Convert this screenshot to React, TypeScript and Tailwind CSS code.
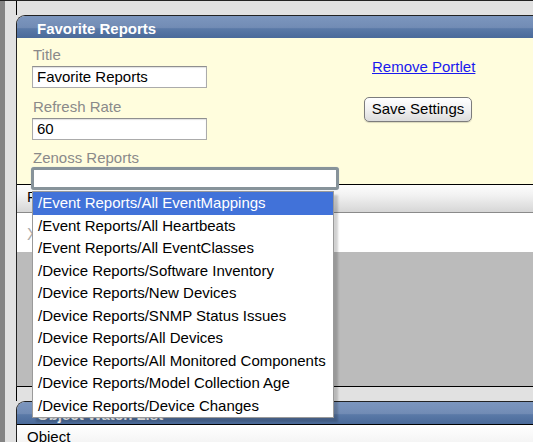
const reports = [
  '/Event Reports/All EventMappings',
  '/Event Reports/All Heartbeats',
  '/Event Reports/All EventClasses',
  '/Device Reports/Software Inventory',
  '/Device Reports/New Devices',
  '/Device Reports/SNMP Status Issues',
  '/Device Reports/All Devices',
  '/Device Reports/All Monitored Components',
  '/Device Reports/Model Collection Age',
  '/Device Reports/Device Changes',
]

const font = { fontFamily: '"Liberation Sans", Arial, Helvetica, sans-serif' }

function PortletHeader({ title }: { title: string }) {
  return (
    <div className="h-[22px] shrink-0 bg-[linear-gradient(to_bottom,#7c96be_0%,#728cb5_52%,#5a79a7_58%,#4a6a9a_100%)] pl-[20px] pt-[4px] text-[15px] font-bold leading-[17px] text-white">
      {title}
    </div>
  )
}

function Field({ label, value }: { label: string; value: string }) {
  return (
    <div className="flex shrink-0 flex-col">
      <div className="ml-[2px] text-[15px] leading-[17px] text-[#8a8a8a]">{label}</div>
      <div className="ml-[1px] mt-[3px] flex h-[22px] w-[175px] shrink-0 items-center border border-[#ababab] border-t-[#8f8f8f] bg-white pl-[4px] text-[15px] text-black shadow-[inset_0_1px_1px_rgba(0,0,0,0.12)]">
        {value}
      </div>
    </div>
  )
}

export default function App() {
  return (
    <div className="relative flex h-[442px] w-[533px] flex-col overflow-hidden bg-[#e1e1e1]" style={font}>
      <div className="h-px w-full shrink-0 bg-[#222]" />
      <div className="flex flex-1">
        <div className="w-[5px] bg-[#848484]" />
        <div className="w-[11px] bg-[#e1e1e1]" />
        <div className="flex flex-1 flex-col">
          <div className="h-[14px] shrink-0 border-l border-black" />

          {/* Favorite Reports portlet */}
          <div className="flex shrink-0 flex-col overflow-hidden rounded-tl-[9px] border-l border-t border-[#222]">
            <PortletHeader title="Favorite Reports" />
            <div className="flex h-[147px] shrink-0 items-start border-b border-black bg-[#fffddd]">
              <div className="flex w-[322px] shrink-0 flex-col pl-[14px] pt-[8px]">
                <Field label="Title" value="Favorite Reports" />
                <div className="mt-[10px] shrink-0">
                  <Field label="Refresh Rate" value="60" />
                </div>
                <div className="ml-[2px] mt-[9px] shrink-0 text-[15px] leading-[17px] text-[#8a8a8a]">Zenoss Reports</div>
                <div className="relative z-10 mt-px h-[23px] w-[308px] shrink-0 rounded-[3px] border-[3px] border-[#87939a] bg-white shadow-[0_0_1px_#b9c3c8]" />
              </div>
              <div className="flex flex-col items-start pl-[25px]">
                <a className="ml-[8px] mt-[20px] text-[15px] leading-[17px] text-[#1a1aee] underline">Remove Portlet</a>
                <button className="mt-[22px] h-[25px] w-[108px] rounded-[5px] border border-[#7c7c7c] bg-[linear-gradient(to_bottom,#ffffff,#f1f1f1_50%,#dcdcdc)] text-[15px] text-black shadow-[0_1px_1px_rgba(0,0,0,0.15)]">
                  Save Settings
                </button>
              </div>
            </div>
            <div className="h-[28px] shrink-0 border-b border-[#8a8a8a] bg-[linear-gradient(to_bottom,#fdfdfd,#f1f1f1_40%,#d6d6d6)] pl-[10px] pt-[3px] text-[15px] leading-[17px] text-black">
              Report
            </div>
            <div className="h-[39px] shrink-0 bg-white pl-[10px] pt-[13px] text-[16px] leading-[18px] text-[#ababab]">X</div>
            <div className="h-[135px] shrink-0 border-b border-black bg-[#bbbbbb]" />
          </div>

          <div className="h-[14px] shrink-0 border-l border-black" />

          {/* Object Watch List portlet */}
          <div className="flex flex-1 flex-col overflow-hidden rounded-tl-[9px] border-l border-t border-[#222]">
            <div className="shrink-0 border-b border-black">
              <PortletHeader title="Object Watch List" />
            </div>
            <div className="flex-1 bg-[linear-gradient(to_bottom,#ffffff,#f3f3f3)] pl-[10px] pt-[3px] text-[15px] leading-[17px] text-black">
              Object
            </div>
          </div>
        </div>
      </div>

      {/* open select list */}
      <div className="absolute left-[32px] top-[191px] z-20 flex w-[302px] flex-col border border-[#9a9a9a] bg-white shadow-[4px_4px_2px_rgba(0,0,0,0.18)]">
        {reports.map((r, i) => (
          <div
            key={r}
            className={
              i === 0
                ? 'flex h-[22.5px] items-center whitespace-nowrap bg-[#4172d9] pl-[5px] text-[15px] text-white'
                : 'flex h-[22.5px] items-center whitespace-nowrap pl-[5px] text-[15px] text-black'
            }
          >
            {r}
          </div>
        ))}
      </div>
    </div>
  )
}
